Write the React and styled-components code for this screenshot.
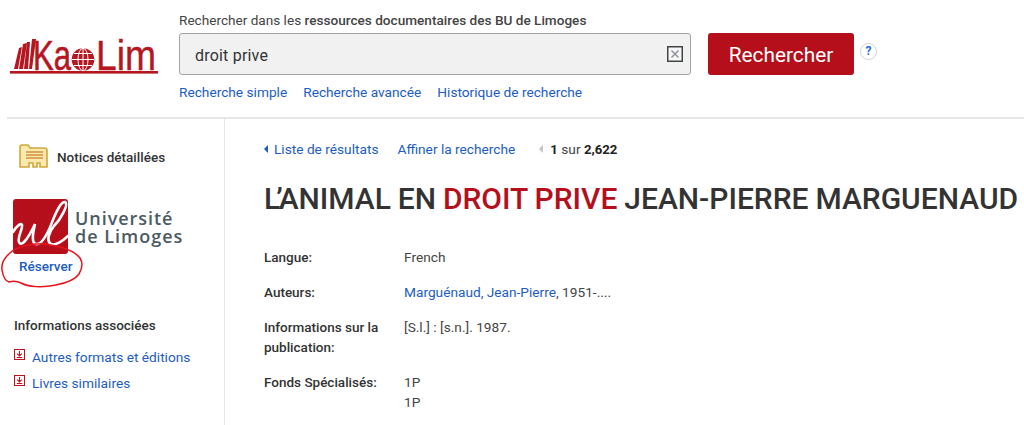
import React from "react";
import styled, { createGlobalStyle } from "styled-components";

const Global = createGlobalStyle`
  html, body { margin: 0; padding: 0; background: #fff; }
  body { font-family: Roboto, "Liberation Sans", sans-serif; font-size: 13.7px; color: #333; height: 425px; overflow: hidden; }
`;
const Header = styled.header`
  display: flex; height: 117px; margin-left: 7px; border-bottom: 2px solid #e6e6e6; box-sizing: content-box;
`;
const LogoWrap = styled.div`
  width: 172px; padding: 30px 0 0 3px; box-sizing: border-box;
  svg { display: block; overflow: visible; }
`;
const SearchCol = styled.div`
  display: flex; flex-direction: column; padding-top: 12px;
`;
const SearchLabel = styled.div`
  font-size: 13.6px; line-height: 16px; color: #444; margin-bottom: 5px;
  b { font-weight: 500; color: #444; }
`;
const SearchRow = styled.div`
  display: flex; align-items: flex-start;
`;
const Input = styled.div`
  width: 512px; height: 42px; box-sizing: border-box; background: #f1f1f1; border: 1px solid #a3a3a3; border-radius: 3px;
  display: flex; align-items: center; justify-content: space-between; padding: 0 7px 0 15px;
  font-size: 16px; color: #333; letter-spacing: 0.2px;
`;
const InputText = styled.span`
  padding-top: 2px;
`;
const SearchButton = styled.button`
  margin-left: 17px; width: 146px; height: 42px; border: 0; border-radius: 3px; background: #b50f1c; color: #fff;
  font-family: inherit; font-size: 20.8px; font-weight: 400; padding: 2px 0 0;
`;
const Help = styled.div`
  width: 17px; height: 17px; margin: 10px 0 0 6px; border: 1px solid #cfd4da; border-radius: 50%; box-sizing: border-box;
  color: #1b6fd8; font-size: 12px; font-weight: 700; line-height: 15px; text-align: center;
`;
const SearchLinks = styled.nav`
  display: flex; gap: 16px; margin-top: 8px; line-height: 18px;
`;
const Link = styled.a`
  color: #1c5cc4; font-size: 13.7px; text-decoration: none;
`;
const Body = styled.div`
  display: flex; height: 306px;
`;
const Side = styled.aside`
  position: relative; width: 225px; box-sizing: border-box; border-right: 1px solid #e6e6e6; flex-shrink: 0;
`;
const DetailRow = styled.div`
  display: flex; align-items: center; gap: 9px; padding: 25px 0 0 19px;
  font-size: 13.5px; font-weight: 500; color: #333;
`;
const ULogo = styled.div`
  display: flex; align-items: center; margin: 30px 0 0 13px; gap: 7px;
`;
const ULogoText = styled.div`
  color: #4c5a63; font-size: 18px; line-height: 18px; font-weight: 600; font-family: "Open Sans", sans-serif; margin-top: 1px;
  span { display: block; letter-spacing: 1px; }
  span:first-child { letter-spacing: 0.95px; }
`;
const Reserve = styled.a`
  display: block; margin: 4px 0 0 19px; color: #1c5cc4; font-size: 13.5px; font-weight: 500; line-height: 16px;
`;
const Circle = styled.svg`
  position: absolute; left: 0; top: 124px; pointer-events: none;
`;
const SideTitle = styled.div`
  margin: 43px 0 0 14px; font-size: 13.5px; font-weight: 500; line-height: 16px; color: #333;
`;
const SideList = styled.div`
  display: flex; flex-direction: column; gap: 8px; margin: 15px 0 0 14px;
`;
const SideItem = styled.div`
  display: flex; align-items: flex-start; gap: 7px; line-height: 18px;
  svg { margin-top: 1px; flex-shrink: 0; }
`;
const Main = styled.main`
  padding: 18px 0 0 39px; flex: 1; min-width: 0; white-space: nowrap;
`;
const TopNav = styled.div`
  display: flex; align-items: center; line-height: 18px; height: 24px;
`;
const Tri = styled.span`
  display: inline-block; width: 0; height: 0; border: 4px solid transparent; border-left-width: 0;
  border-right: 4px solid ${p => p.$c}; margin-right: ${p => p.$m}px;
`;
const NavLink = styled(Link)`
  margin-right: ${p => p.$mr}px;
`;
const Count = styled.span`
  font-size: 13.7px; color: #444; b { font-weight: 700; color: #222; font-size: 13.2px; }
`;
const Title = styled.h1`
  margin: 21px 0 0; font-size: 30px; line-height: 34px; font-weight: 500; color: #333; letter-spacing: 0; word-spacing: -0.6px;
`;
const Kern = styled.span`
  letter-spacing: -4px;
`;
const Hit = styled.span`
  color: #b50f1c;
`;
const Fields = styled.dl`
  display: grid; grid-template-columns: 140px 1fr; margin: 31px 0 0; row-gap: 15px; line-height: 20px; font-size: 13.7px;
  dt { font-weight: 500; font-size: 13.5px; color: #333; white-space: normal; width: 120px; }
  dd { margin: 0; color: #444; }
`;

const BookLogo = () => (
  <svg width="150" height="46" viewBox="0 0 150 46">
    <g fill="#b5161f">
      <polygon points="4,39 9,18 12,17 8,39" />
      <polygon points="9,39 13,14 17,13 13,39" />
      <polygon points="14,39 17,12 20,12 18,39" />
      <polygon points="19,39 22,9 26,9 22,39" />
      <rect x="0" y="41" width="148" height="2.6" />
      <circle cx="73" cy="29.5" r="11.3" />
    </g>
    <g fill="none" stroke="#fff" strokeWidth="1">
      <ellipse cx="73" cy="29.5" rx="5" ry="11.3" />
      <path d="M73 18v23M62 29.5h22M64 23.5h18M64 35.5h18" />
    </g>
    <text x="23" y="40" fontFamily="Liberation Sans, sans-serif" fontSize="43" fill="#b5161f" stroke="#b5161f" strokeWidth="0.6" textLength="38" lengthAdjust="spacingAndGlyphs">Ka</text>
    <text x="86" y="40" fontFamily="Liberation Sans, sans-serif" fontSize="43" fill="#b5161f" stroke="#b5161f" strokeWidth="0.4" textLength="60" lengthAdjust="spacingAndGlyphs">Lim</text>
  </svg>
);

const FolderIcon = () => (
  <svg width="29" height="25" viewBox="0 0 29 25">
    <path d="M1 3.5C1 2 2 1 3 1h6l2 3h14c2 0 3 1 3 2v17h-7v-4h-3v4h-4v-4h-4v4H1z" fill="#fbe9ae" stroke="#d0a83c" strokeWidth="1.6" />
    <path d="M7 8h17M7 11h17M7 14h17" stroke="#d2913b" strokeWidth="1.4" />
  </svg>
);

const ULMark = () => (
  <svg width="55" height="55" viewBox="0 0 55 55" style={{ flexShrink: 0 }}>
    <rect width="55" height="55" rx="3" fill="#b50f1c" />
    <path d="M0 33C3 28 8 23 9 26C10 30 4 38 6 43C8 48 14 42 22 25C20 34 18 44 23 45C28 46 33 38 38 26C42 15 48 2 52 3C56 5 48 20 41 27C36 33 33 42 38 45C42 47 50 42 55 37" fill="none" stroke="#fff" strokeWidth="2.6" strokeLinecap="round" />
  </svg>
);

const DownIcon = () => (
  <svg width="11" height="11" viewBox="0 0 11 11">
    <rect x="0.5" y="0.5" width="10" height="10" fill="#fff" stroke="#c0101e" />
    <path d="M5.5 2v4.5M3.2 4.6l2.3 2.3 2.3-2.3M2.8 8.5h5.4" fill="none" stroke="#c0101e" strokeWidth="1.1" />
  </svg>
);

const ClearIcon = () => (
  <svg width="16" height="16" viewBox="0 0 16 16">
    <rect x="0.75" y="0.75" width="14.5" height="14.5" fill="#f6f8f8" stroke="#444" strokeWidth="1.5" />
    <path d="M4.5 4.5l7 7M11.5 4.5l-7 7" stroke="#8e979c" strokeWidth="1.6" />
  </svg>
);

export default function App() {
  return (
    <>
      <Global />
      <Header>
        <LogoWrap><BookLogo /></LogoWrap>
        <SearchCol>
          <SearchLabel>Rechercher dans les <b>ressources documentaires des BU de Limoges</b></SearchLabel>
          <SearchRow>
            <Input><InputText>droit prive</InputText><ClearIcon /></Input>
            <SearchButton>Rechercher</SearchButton>
            <Help>?</Help>
          </SearchRow>
          <SearchLinks>
            <Link>Recherche simple</Link>
            <Link>Recherche avancée</Link>
            <Link>Historique de recherche</Link>
          </SearchLinks>
        </SearchCol>
      </Header>
      <Body>
        <Side>
          <DetailRow><FolderIcon />Notices détaillées</DetailRow>
          <ULogo>
            <ULMark />
            <ULogoText><span>Université</span><span>de Limoges</span></ULogoText>
          </ULogo>
          <Reserve>Réserver</Reserve>
          <Circle width="90" height="50" viewBox="0 0 90 50">
            <path d="M48 1C30 0 16 4 10 10C4 15 1 20 2 27C3 33 5 38 9 39C13 38 17 38 21 40C28 44 42 45 56 42C66 40 75 37 79 31C82 26 83 20 80 15C75 9 64 3 43 1" fill="none" stroke="#e8141c" strokeWidth="1.5" />
          </Circle>
          <SideTitle>Informations associées</SideTitle>
          <SideList>
            <SideItem><DownIcon /><Link>Autres formats et éditions</Link></SideItem>
            <SideItem><DownIcon /><Link>Livres similaires</Link></SideItem>
          </SideList>
        </Side>
        <Main>
          <TopNav>
            <Tri $c="#1c5cc4" $m={6} />
            <NavLink $mr={19}>Liste de résultats</NavLink>
            <NavLink $mr={24}>Affiner la recherche</NavLink>
            <Tri $c="#c4c4c4" $m={7} />
            <Count><b>1</b> sur <b>2,622</b></Count>
          </TopNav>
          <Title><Kern>L’</Kern>ANIMAL EN <Hit>DROIT PRIVE</Hit> JEAN-PIERRE MARGUENAUD</Title>
          <Fields>
            <dt>Langue:</dt><dd>French</dd>
            <dt>Auteurs:</dt><dd><Link>Marguénaud, Jean-Pierre</Link>, 1951-....</dd>
            <dt>Informations sur la publication:</dt><dd>[S.l.] : [s.n.]. 1987.</dd>
            <dt>Fonds Spécialisés:</dt><dd>1P<br />1P</dd>
          </Fields>
        </Main>
      </Body>
    </>
  );
}
